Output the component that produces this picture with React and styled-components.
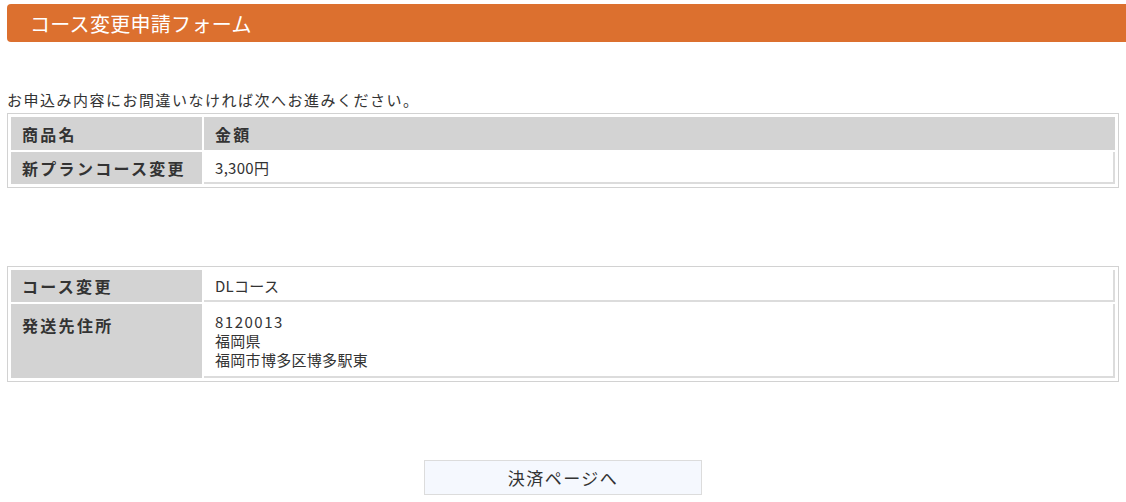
import styled, { createGlobalStyle } from 'styled-components';

const GlobalStyle = createGlobalStyle`
    html, body {
        margin: 0;
        padding: 0;
        background: #fff;
        overflow-x: hidden;
    }
    body {
        font-family: "Noto Sans CJK JP", "Noto Sans", sans-serif;
        color: #333;
    }
`;

const Page = styled.div`
    padding: 4px 7px 0 7px;
`;

const Title = styled.h1`
    margin: 0 -7px 0 0;
    height: 38px;
    display: flex;
    align-items: center;
    padding-left: 23px;
    background: #dc702f;
    border-radius: 4px 0 0 4px;
    color: #fff;
    font-size: 20px;
    font-weight: 400;
    letter-spacing: 0.3px;
`;

const Lead = styled.p`
    margin: 48px 0 3px;
    font-size: 15px;
    line-height: 20px;
    letter-spacing: 1.5px;
`;

const Table = styled.table`
    width: 100%;
    border: 1px solid #d2d2d2;
    border-collapse: separate;
    border-spacing: 2px;
    padding: 1px;
    margin-bottom: ${p => p.$gap || 0}px;
`;

const Label = styled.th`
    width: 169px;
    padding: ${p => (p.$top ? '9px 11px 0' : '0 11px')};
    height: ${p => p.$h || 32}px;
    background: #d3d3d3;
    text-align: left;
    vertical-align: ${p => (p.$top ? 'top' : 'middle')};
    font-size: 16px;
    font-weight: 700;
    letter-spacing: 2.3px;
    color: #333;
    white-space: nowrap;
`;

const Head = styled(Label)`
    width: auto;
`;

const Value = styled.td`
    padding: ${p => (p.$top ? '8px 11px 7px' : '0 11px')};
    height: ${p => p.$h || 30}px;
    border-right: 2px solid #dcdcdc;
    border-bottom: 2px solid #dcdcdc;
    vertical-align: ${p => (p.$top ? 'top' : 'middle')};
    font-size: 15px;
    line-height: 19px;
    letter-spacing: 0.3px;
    color: #333;
`;

const Line = styled.div`
    height: 19px;
    line-height: 19px;
    font-size: 15px;
    letter-spacing: ${p => (p.$digits ? 1.5 : 0.3)}px;
`;

const Actions = styled.div`
    display: flex;
    justify-content: center;
    margin-left: -7px;
    margin-right: -7px;
`;

const PayButton = styled.button`
    width: 278px;
    height: 35px;
    background: #f5f8fe;
    border: 1px solid #dcdcdc;
    font-family: "Noto Sans CJK JP", sans-serif;
    font-size: 17px;
    letter-spacing: 1.5px;
    color: #333;
    cursor: pointer;
`;

export default function App() {
    return (
        <Page>
            <GlobalStyle />
            <Title>コース変更申請フォーム</Title>
            <Lead>お申込み内容にお間違いなければ次へお進みください。</Lead>
            <Table $gap={78}>
                <tbody>
                    <tr>
                        <Label $h={33}>商品名</Label>
                        <Head $h={33}>金額</Head>
                    </tr>
                    <tr>
                        <Label>新プランコース変更</Label>
                        <Value>3,300円</Value>
                    </tr>
                </tbody>
            </Table>
            <Table $gap={78}>
                <tbody>
                    <tr>
                        <Label>コース変更</Label>
                        <Value>DLコース</Value>
                    </tr>
                    <tr>
                        <Label $top $h={64}>発送先住所</Label>
                        <Value $top $h={57}>
                            <Line $digits>8120013</Line>
                            <Line>福岡県</Line>
                            <Line>福岡市博多区博多駅東</Line>
                        </Value>
                    </tr>
                </tbody>
            </Table>
            <Actions>
                <PayButton type="button">決済ページへ</PayButton>
            </Actions>
        </Page>
    );
}
